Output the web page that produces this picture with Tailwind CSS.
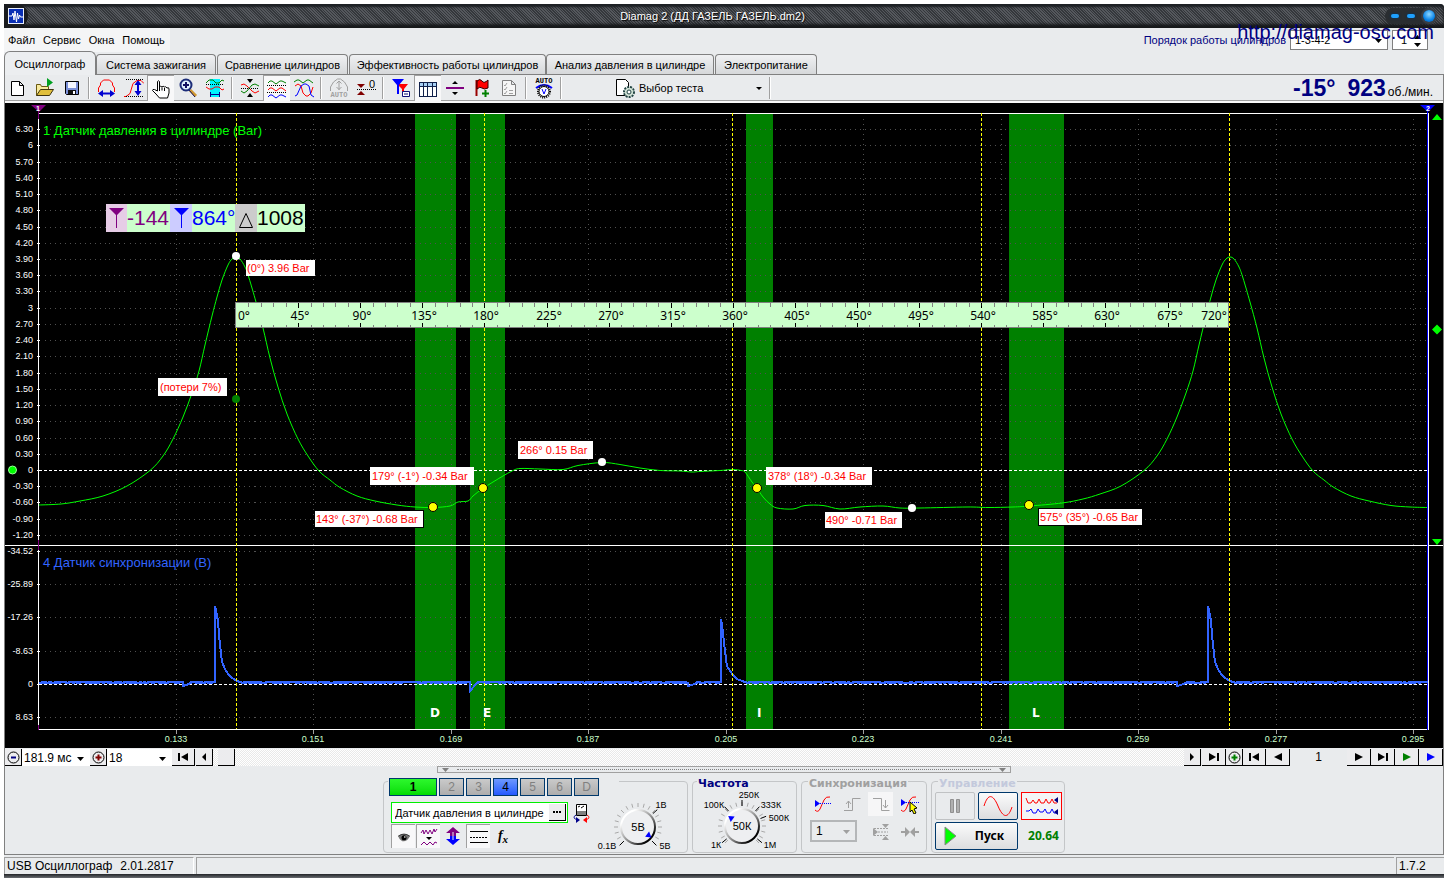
<!DOCTYPE html>
<html lang="ru">
<head>
<meta charset="utf-8">
<title>Diamag 2 (ДД ГАЗЕЛЬ ГАЗЕЛЬ.dm2)</title>
<script src="https://cdn.jsdelivr.net/npm/@tailwindcss/browser@4"></script>
</head>
<body class="bg-white font-['Liberation_Sans',sans-serif] text-[11px] leading-4 text-black">
<div class="relative min-h-screen flex flex-col px-1 pt-1">

<!-- Title bar -->
<header class="flex h-6 items-center justify-between rounded-t-sm bg-[repeating-linear-gradient(45deg,#34373b_0px,#34373b_1px,#55585d_1px,#55585d_2px)] shadow-[inset_0_3px_2px_#1d2024,inset_0_-4px_3px_#16181a]">
  <div class="flex h-6 w-6 items-center justify-center rounded-r-xl bg-[#1a1c1f]">
    <svg width="16" height="16" viewBox="0 0 16 16"><rect x=".5" y=".5" width="15" height="15" fill="#0a2fb4" stroke="#e8eefc"/><path d="M1 8h3l1-3 1 7 1-9 1.500 11 1-9 1 6 1-4 1 2h3" fill="none" stroke="#fff"/></svg>
  </div>
  <h1 class="flex-1 pl-3 text-center text-white [text-shadow:1px_1px_1px_#000]">Diamag 2 (ДД ГАЗЕЛЬ ГАЗЕЛЬ.dm2)</h1>
  <div class="mr-2 flex h-4 items-center gap-2 rounded-lg bg-[#2a2d31] pr-px pl-1.5">
    <button aria-label="Свернуть" class="h-1 w-2 rounded-sm bg-[#1ea0ff] shadow-[0_0_2px_1px_#15304a]"></button>
    <button aria-label="Развернуть" class="h-1 w-2 rounded-sm bg-[#1ea0ff] shadow-[0_0_2px_1px_#15304a]"></button>
    <button aria-label="Закрыть" class="h-3 w-3 rounded-full bg-[radial-gradient(circle_at_50%_35%,#8fd8ff,#0a84e8_60%,#0457a8)] shadow-[0_0_1px_2px_#3c4046]"></button>
  </div>
</header>

<div class="flex flex-1 flex-col bg-[#e9ebed]">
<!-- Menu -->
<div class="flex h-6 items-center justify-between">
  <nav class="flex h-6 w-[166px] items-center gap-2 bg-[#f4f5f6] pl-1">
    <a href="#">Файл</a><a href="#">Сервис</a><a href="#">Окна</a><a href="#">Помощь</a>
  </nav>
  <div class="flex items-center gap-1 pr-4">
    <label for="order" class="text-[#000080]">Порядок работы цилиндров</label>
    <div class="relative h-5 w-[98px] border border-[#808080] bg-white">
      <select id="order" class="h-full w-full appearance-none pl-1 leading-4"><option>1-3-4-2</option></select>
      <svg class="pointer-events-none absolute right-1 top-2" width="8" height="4"><path d="M0 0h7L3.500 4z"/></svg>
    </div>
    <div class="relative h-5 w-9 border border-[#808080] bg-white">
      <input aria-label="Цилиндр" value="1" class="h-full w-full pl-2 leading-4">
      <svg class="pointer-events-none absolute right-1 top-1" width="10" height="12"><path d="M1 4h7L4.500 0zM1 8h7L4.500 12z"/></svg>
    </div>
  </div>
</div>

<!-- Tabs -->
<div role="tablist" class="flex h-[23px] items-end border-b border-[#808080]">
  <button role="tab" aria-selected="true" class="-mb-px h-6 w-[92px] rounded-t-md border border-b-0 border-[#808080] bg-[#eceef0]">Осциллограф</button>
  <button role="tab" class="h-5 w-[120px] rounded-t-sm border border-b-0 border-[#808080] bg-linear-to-b from-[#f0f1f3] to-[#d6d8da]">Система зажигания</button>
  <button role="tab" class="ml-px h-5 w-[131px] rounded-t-sm border border-b-0 border-[#808080] bg-linear-to-b from-[#f0f1f3] to-[#d6d8da]">Сравнение цилиндров</button>
  <button role="tab" class="ml-px h-5 w-[197px] rounded-t-sm border border-b-0 border-[#808080] bg-linear-to-b from-[#f0f1f3] to-[#d6d8da]">Эффективность работы цилиндров</button>
  <button role="tab" class="h-5 w-[168px] rounded-t-sm border border-b-0 border-[#808080] bg-linear-to-b from-[#f0f1f3] to-[#d6d8da]">Анализ давления в цилиндре</button>
  <button role="tab" class="ml-px h-5 w-[102px] rounded-t-sm border border-b-0 border-[#808080] bg-linear-to-b from-[#f0f1f3] to-[#d6d8da]">Электропитание</button>
</div>

<main class="flex flex-col border-x border-b border-[#808080]">
<!-- Toolbar -->
<div class="flex h-7 items-center border-b-2 border-[#f8f8f8] shadow-[inset_0_-1px_0_#a0a0a0]">
  <button aria-label="Новый" class="flex h-[26px] w-[26px] items-center justify-center"><svg width="20" height="20" viewBox="0 0 20 20"><path d="M4.500 3.500h8l4 4v10h-12zM12.500 3.500v4h4" transform="translate(-1)" fill="#fff" stroke="#000"/></svg></button>
  <button aria-label="Открыть" class="flex h-[26px] w-[27px] items-center justify-center"><svg width="20" height="20" viewBox="0 0 20 20"><path d="M1.500 17.500v-11h4l1 2h7v3" fill="#f7ea9e" stroke="#6b5a10"/><path d="M1.500 17.500l4-6h13l-4 6z" fill="#e0bf3c" stroke="#3e3410"/><path d="M12 0v9l6-4.500z" fill="#00a020"/></svg></button>
  <button aria-label="Сохранить" class="flex h-[26px] w-[27px] items-center justify-center"><svg width="20" height="20" viewBox="0 0 20 20"><path d="M3.500 3.500h13v13h-12l-1-1z" fill="#7a8fd8" stroke="#000"/><path d="M6 4h8v6H6z" fill="#f4f6ff"/><path d="M6 12h8v4H6z" fill="#111"/><path d="M11 13h2v3h-2z" fill="#fff"/></svg></button>
  <span class="mx-[3px] h-[22px] w-0.5 border-l border-[#a0a0a0] bg-white"></span>
  <button aria-label="Ширина" class="flex h-[26px] w-[27px] items-center justify-center"><svg width="20" height="20" viewBox="0 0 20 20" fill="none"><path d="M1.500 14v-4l2-3V5l3-3h6l3 3v2l2 3v4" stroke="#f00"/><path d="M4 15.500h11" stroke="#0000d0" stroke-width="2"/><path d="M6 12v7l-5-3.500zM13 12v7l5-3.500z" fill="#0000d0"/></svg></button>
  <button aria-label="Высота" class="flex h-[26px] w-[27px] items-center justify-center"><svg width="20" height="20" viewBox="0 0 20 20" fill="none"><path d="M0 18.500h2l4-3 3-10 4-3h4l3 3" stroke="#f00"/><path d="M2 1.500h18M2 18.500h18" stroke="#000" stroke-dasharray="1 1"/><path d="M14 5v10" stroke="#0000d0" stroke-width="2"/><path d="M10.500 7h7L14 2zM10.500 13h7L14 18z" fill="#0000d0"/></svg></button>
  <button aria-label="Рука" aria-pressed="true" class="flex h-[26px] w-[27px] items-center justify-center border-l border-t border-[#a0a0a0] bg-[#f8f8f9]"><svg width="20" height="20" viewBox="0 0 20 20"><path d="M6.500 12V2.500q1-1.500 2 0V8q1-1.500 2.500 0 1-1.500 2.500 0 1-1 2.500 1 2-1 2 1v4l-1.500 5h-8L5 15l-3.500-3.500q0-1.500 2-1z" fill="#fff" stroke="#000"/><path d="M8.500 8v4M11 8.500v3M13.500 9v3" stroke="#000"/></svg></button>
  <button aria-label="Масштаб" class="flex h-[26px] w-[27px] items-center justify-center"><svg width="20" height="20" viewBox="0 0 20 20"><path d="M12 12l6 6" stroke="#d09830" stroke-width="3"/><path d="M11 12l6 7" stroke="#101060"/><circle cx="8" cy="7" r="5.500" fill="#dff1ff" stroke="#1c2c78" stroke-width="2"/><path d="M8 4v6M5 7h6" stroke="#101060" stroke-width="2"/></svg></button>
  <button aria-label="Участок" class="flex h-[26px] w-[27px] items-center justify-center"><svg width="20" height="20" viewBox="0 0 20 20" fill="none"><path d="M5 1h10v18H5z" fill="#00f4ff"/><path d="M1 5l3-3h4l3 3h3l3-3 2 1" stroke="#008000"/><path d="M1 9l3 2h3l3-2h4l3 3 2-1" stroke="#f00"/><path d="M1 6.500h18" stroke="#000" stroke-dasharray="1 1"/><path d="M5.500 14v5M14.500 14v5M6 16.500h9" stroke="#00008b"/></svg></button>
  <span class="mx-[3px] h-[22px] w-0.5 border-l border-[#a0a0a0] bg-white"></span>
  <button aria-label="Совместить" class="flex h-[26px] w-[27px] items-center justify-center"><svg width="20" height="20" viewBox="0 0 20 20" fill="none"><path d="M1 7l3-1 3 2 5 5 3 2 4-2" stroke="#f00"/><path d="M1 13l3 2 3-2 5-6 3-1 4 2" stroke="#008000"/><path d="M1 10.500h18" stroke="#000" stroke-dasharray="1 1"/><path d="M7 1h6l-3 4zM7 19h6l-3-4z" fill="#000"/></svg></button>
  <button aria-label="Раздельно" aria-pressed="true" class="flex h-[26px] w-[27px] items-center justify-center border-l border-t border-[#a0a0a0] bg-[#f8f8f9]"><svg width="20" height="20" viewBox="0 0 20 20" fill="none"><path d="M1 4l2-2h2l4 3 4-3h2l4 2" stroke="#008000"/><path d="M1 11l2-2h2l4 3 4-3h2l4 3" stroke="#f00"/><path d="M1 18l2-2h2l4 3 4-3h2l4 2" stroke="#00f"/><path d="M0 6.500h20M0 13.500h20" stroke="#000" stroke-dasharray="1 1"/></svg></button>
  <button aria-label="Вместе" class="flex h-[26px] w-[27px] items-center justify-center"><svg width="20" height="20" viewBox="0 0 20 20" fill="none"><path d="M0 4l3-2h2l4 3 4-3h2l4 3" stroke="#008000"/><path d="M1 8l3-2 3 2 2 7 3 3h2l3-3 2-6" stroke="#f00"/><path d="M1 18l2-1 4-9 3-2h2l3 2 2 9 3 2" stroke="#00f"/></svg></button>
  <span class="mx-[3px] h-[22px] w-0.5 border-l border-[#a0a0a0] bg-white"></span>
  <button aria-label="Авто масштаб" disabled class="flex h-[26px] w-[27px] items-center justify-center"><svg width="20" height="22" viewBox="0 0 20 22" fill="none"><path d="M1.500 14v-4l3-5 4-3h3l4 3 3 5v4M10 4v9M7.500 6.500L10 4l2.500 2.500M7.500 10l2.500 2.500 2.500-2.500" stroke="#a0a0a0"/><text x="10" y="20" text-anchor="middle" font-family="Liberation Mono, monospace" font-size="7" font-weight="bold" fill="#a0a0a0">AUTO</text></svg></button>
  <button aria-label="Ноль" class="flex h-[26px] w-[27px] items-center justify-center"><svg width="20" height="20" viewBox="0 0 20 20"><path d="M1 6h8l-4 4zM1 17h8l-4-4z" fill="#800000"/><path d="M1 11.500h19" stroke="#000" stroke-dasharray="1 1"/><text x="13" y="10" font-family="Liberation Sans, sans-serif" font-size="11">0</text></svg></button>
  <span class="mx-[3px] h-[22px] w-0.5 border-l border-[#a0a0a0] bg-white"></span>
  <button aria-label="Маркеры" class="flex h-[26px] w-[27px] items-center justify-center"><svg width="20" height="20" viewBox="0 0 20 20"><path d="M6 6h11l-4 5v7h-2v-7z" fill="#f00"/><path d="M1 1h12L8 7v9H6V7z" fill="#00f"/><path d="M11.500 13.500h7v5h-7z" fill="#fff" stroke="#10107a"/><path d="M13 16h2M16 15v2" stroke="#10107a"/></svg></button>
  <button aria-label="Таблица" aria-pressed="true" class="flex h-[26px] w-[27px] items-center justify-center border-l border-t border-[#a0a0a0] bg-[#f8f8f9]"><svg width="20" height="20" viewBox="0 0 20 20" shape-rendering="crispEdges"><path d="M1.500 3.500h17v14h-17z" fill="#fff" stroke="#10204a"/><path d="M2 4h16v3H2z" fill="#a8d0f4"/><path d="M1 7.500h18M5.500 3v14M9.500 3v14M14.500 3v14" stroke="#10204a"/></svg></button>
  <button aria-label="Линия" class="flex h-[26px] w-[27px] items-center justify-center"><svg width="20" height="20" viewBox="0 0 20 20"><path d="M1 9h18v2H1z" fill="#800080"/><path d="M7 6h6l-3-3zM7 14h6l-3 3z"/></svg></button>
  <button aria-label="Флаг" class="flex h-[26px] w-[27px] items-center justify-center"><svg width="20" height="20" viewBox="0 0 20 20"><path d="M4.500 2v16" stroke="#900" stroke-width="2"/><path d="M5 3q3-3 5 0t6-1v8q-4 2-6 0t-5 1z" fill="#f00" stroke="#300"/><path d="M13.500 12v7M10 15.500h7" stroke="#008000" stroke-width="2"/></svg></button>
  <button aria-label="Список" disabled class="flex h-[26px] w-[27px] items-center justify-center"><svg width="20" height="20" viewBox="0 0 20 20" fill="none"><path d="M3.500 2.500h9l4 4v11h-13zM12.500 2.500v4h4" stroke="#808080" fill="#f6f6f6"/><path d="M5 7l1 1 2-3M5 11l1 1 2-3M5 15l1 1 2-3M10 12.500h4M10 15.500h4" stroke="#a0a0a0"/></svg></button>
  <span class="mx-[3px] h-[22px] w-0.5 border-l border-[#a0a0a0] bg-white"></span>
  <button aria-label="Авто" class="flex h-[26px] w-[27px] items-center justify-center"><svg width="20" height="22" viewBox="0 0 20 22"><text x="10" y="6" text-anchor="middle" font-family="Liberation Mono, monospace" font-size="7" font-weight="bold">AUTO</text><path d="M2 11q8-6 16 0" fill="none" stroke="#00f" stroke-width="2"/><circle cx="10" cy="14.500" r="6" fill="#fff" stroke="#000" stroke-dasharray="1 1" stroke-width="2"/><circle cx="10" cy="14.500" r="5" fill="#fff" stroke="#000"/><path d="M8 12l2 5 2-5" fill="none" stroke="#00f"/></svg></button>
  <span class="mx-[3px] h-[22px] w-0.5 border-l border-[#a0a0a0] bg-white"></span>
  <div class="relative ml-[50px] flex h-[22px] w-[151px] items-center">
    <svg width="20" height="20" viewBox="0 0 20 20"><path d="M1.500 1.500h9l3 3v13h-12z" fill="#fff" stroke="#000"/><circle cx="14" cy="14" r="5" fill="#cfe0d4" stroke="#244" stroke-width="2" stroke-dasharray="2 1"/><circle cx="14" cy="14" r="4" fill="#cfe0d4"/><circle cx="14" cy="14" r="2" fill="#fff" stroke="#244"/></svg>
    <select aria-label="Выбор теста" class="h-5 flex-1 appearance-none pl-1 leading-4"><option>Выбор теста</option></select>
    <svg class="pointer-events-none absolute right-1 top-2.5" width="6" height="4"><path d="M0 0h6L3 3z"/></svg>
  </div>
  <span class="mx-[3px] h-[22px] w-0.5 border-l border-[#a0a0a0] bg-white"></span>
  <div class="ml-auto flex items-baseline pr-2.5 text-[#000080]">
    <output class="text-[23px] leading-6 font-bold">-15°</output>
    <output class="ml-3 text-[23px] leading-6 font-bold">923</output>
    <span class="ml-0.5 text-xs leading-4 text-black">об./мин.</span>
  </div>
</div>

<!-- Oscilloscope screen -->
<svg id="scope" class="block h-auto w-full bg-black" viewBox="5 103 1438 645" role="img" aria-label="Осциллограмма">
  <g fill="#008000"><path d="M415 114h41v615h-41zM470 114h35v615h-35zM746 114h27v615h-27zM1009 114h55v615h-55z"/></g>
  <g id="grid" transform="translate(.5 .5)" shape-rendering="crispEdges" fill="none"></g>
  <g font-family="Liberation Sans, sans-serif" font-size="9" fill="#fff" id="labels"></g>
  <g fill="none" shape-rendering="crispEdges">
    <path d="M38 113.500H1429M5 545.500H1443M38 729.500H1428M38.500 113V730M1428.500 113V730" stroke="#fff"/>
    <path d="M1427.500 108V730" stroke="#00f"/>
    <path d="M38.500 108v11M38.500 540v10M38.500 725v5" stroke="#800080"/>
    <path d="M39 470.500H1427M39 684.500H1427" stroke="#fff" stroke-dasharray="3 2"/>
  </g>
  <g fill="none">
    <path id="sync" stroke="#3264ff" stroke-width="2" shape-rendering="crispEdges"/>
    <path id="pressure" stroke="#0f0"/>
    <path d="M236.500 113V729M484.500 113V729M732.500 113V729M981.500 113V729M1229.500 113V729" stroke="#ff0" stroke-dasharray="3 2" shape-rendering="crispEdges"/>
  </g>
  <g font-family="Liberation Sans, sans-serif" font-size="13">
    <text x="43" y="135" fill="#0f0">1 Датчик давления в цилиндре (Bar)</text>
    <text x="43" y="567" fill="#3264ff">4 Датчик синхронизации (В)</text>
  </g>
  <g font-family="DejaVu Sans, sans-serif" font-size="12" font-weight="bold" fill="#fff">
    <text x="430" y="717">D</text><text x="483" y="717">E</text><text x="757" y="717">I</text><text x="1032" y="717">L</text>
  </g>
  <!-- degree ruler -->
  <path d="M235.500 302.500h993v25h-993z" fill="#cfc" stroke="#808080" shape-rendering="crispEdges"/>
  <g id="ruler" shape-rendering="crispEdges" font-family="Noto Sans, sans-serif" font-size="12"></g>
  <!-- cursor read-out -->
  <path d="M106 204h199v28H106z" fill="#cfc"/>
  <path d="M106 204h21v28h-21z" fill="#e6cce6"/><path d="M170 204h22v28h-22z" fill="#ccf"/><path d="M235 204h22v28h-22z" fill="#ccc"/>
  <path d="M109 208h15l-7 7v13h-1v-13z" fill="#800080"/><path d="M174 208h15l-7 7v13h-1v-13z" fill="#00f"/><path d="M246 213.500l6.500 14h-13z" fill="none" stroke="#000"/>
  <g font-family="Liberation Sans, sans-serif" font-size="21">
    <text x="127" y="225" fill="#800080">-144</text><text x="192" y="225" fill="#00f">864°</text><text x="257" y="225">1008</text>
  </g>
  <!-- callouts -->
  <path d="M314 510h110v18H314zM1038 508h105v18h-105z"/>
  <path fill="#fff" d="M246 260h69v16h-69zM158 378h69v18h-69zM370 467h104v18H370zM315 511h108v16H315zM518 441h75v18h-75zM766 467h106v18H766zM825 512h77v16h-77zM1039 509h103v16h-103z"/>
  <g font-family="Liberation Sans, sans-serif" font-size="11" fill="#f00">
    <text x="247" y="272">(0°) 3.96 Bar</text><text x="160" y="391">(потери 7%)</text><text x="372" y="480">179° (-1°) -0.34 Bar</text><text x="316" y="523">143° (-37°) -0.68 Bar</text><text x="520" y="454">266° 0.15 Bar</text><text x="768" y="480">378° (18°) -0.34 Bar</text><text x="826" y="524">490° -0.71 Bar</text><text x="1040" y="521">575° (35°) -0.65 Bar</text>
  </g>
  <g fill="#fff"><circle cx="236" cy="256" r="4"/><circle cx="602" cy="462" r="4"/><circle cx="912" cy="508" r="4"/></g>
  <g fill="#ff0" stroke="#000"><circle cx="433" cy="507" r="4.500"/><circle cx="483" cy="488" r="4.500"/><circle cx="757" cy="488" r="4.500"/><circle cx="1029" cy="505" r="4.500"/></g>
  <circle cx="236" cy="399" r="4" fill="#008000"/>
  <circle cx="12.500" cy="470" r="4" fill="#0f0" stroke="#9f9"/>
  <path fill="#0f0" d="M1432 120h10l-5-6zM1432 539h10l-5 6zM1432 329.500l5-5 5 5-5 5z"/>
  <path d="M31 105h15l-7 7z" fill="#800080"/><path d="M1420 105h15l-7 7z" fill="#00f"/>
  <g font-family="Liberation Sans, sans-serif" font-size="7" font-weight="bold" fill="#fff"><text x="36" y="111">1</text><text x="1426" y="111">2</text></g>
</svg>

<!-- Transport row -->
<div class="flex h-[18px] bg-[#e9ebed] pt-px text-xs leading-4">
  <button aria-label="Уменьшить" class="flex h-[17px] w-[17px] shrink-0 items-center justify-center border-r border-b border-black bg-[#ececee]"><svg width="13" height="13" viewBox="0 0 13 13" fill="none"><circle cx="6.500" cy="6.500" r="5.500" stroke="#000"/><path d="M4 6.500h5" stroke="#000080" stroke-width="2"/></svg></button>
  <div class="relative w-[68px] shrink-0 bg-white"><select aria-label="Развёртка" class="h-full w-full appearance-none pl-0.5 leading-4"><option>181.9 мс</option></select><svg class="pointer-events-none absolute right-1.5 top-2" width="7" height="4"><path d="M0 0h7L3.500 4z"/></svg></div>
  <button aria-label="Увеличить" class="flex h-[17px] w-[17px] shrink-0 items-center justify-center border-r border-b border-black bg-[#ececee]"><svg width="13" height="13" viewBox="0 0 13 13" fill="none"><circle cx="6.500" cy="6.500" r="5.500" stroke="#000"/><path d="M3.500 6.500h6M6.500 3.500v6" stroke="#800000" stroke-width="2"/></svg></button>
  <div class="relative w-[65px] shrink-0 bg-white"><select aria-label="Кадр" class="h-full w-full appearance-none pl-0.5 leading-4"><option>18</option></select><svg class="pointer-events-none absolute right-1.5 top-2" width="7" height="4"><path d="M0 0h7L3.500 4z"/></svg></div>
  <button aria-label="В начало" class="flex h-[17px] w-[23px] shrink-0 items-center justify-center border-r border-b border-black bg-[#ececee]"><svg width="12" height="8"><path d="M1 0h2v8H1zM11 0v8L4 4z"/></svg></button>
  <button aria-label="Влево" class="ml-px flex h-[17px] w-[17px] shrink-0 items-center justify-center border-r border-b border-black bg-[#ececee]"><svg width="6" height="8"><path d="M5 0v8L1 4z"/></svg></button>
  <div class="flex flex-1 bg-[repeating-conic-gradient(#e9e9e9_0_25%,#ffffff_0_50%)] bg-[size:2px_2px]"><div class="ml-[5px] h-[17px] w-[17px] border-r border-b border-black bg-[#ececee]"></div></div>
  <button aria-label="Вправо" class="flex h-[17px] w-[17px] shrink-0 items-center justify-center border-r border-b border-black bg-[#ececee]"><svg width="6" height="8"><path d="M1 0v8l4-4z"/></svg></button>
  <button aria-label="В конец" class="ml-px flex h-[17px] w-6 shrink-0 items-center justify-center border-r border-b border-black bg-[#ececee]"><svg width="12" height="8"><path d="M9 0h2v8H9zM1 0v8l7-4z"/></svg></button>
  <button aria-label="Добавить" class="flex h-[17px] w-[17px] shrink-0 items-center justify-center border-r border-b border-black bg-[#ececee]"><svg width="13" height="13" viewBox="0 0 13 13" fill="none"><circle cx="6.500" cy="6.500" r="5.500" stroke="#000"/><path d="M3.500 6.500h6M6.500 3.500v6" stroke="#008000" stroke-width="2"/></svg></button>
  <button aria-label="Первый цикл" class="flex h-[17px] w-[23px] shrink-0 items-center justify-center border-r border-b border-black bg-[#ececee]"><svg width="12" height="8"><path d="M1 0h2v8H1zM11 0v8L4 4z"/></svg></button>
  <button aria-label="Предыдущий цикл" class="flex h-[17px] w-6 shrink-0 items-center justify-center border-r border-b border-black bg-[#ececee]"><svg width="8" height="8"><path d="M8 0v8L0 4z"/></svg></button>
  <output class="w-[57px] shrink-0 text-center">1</output>
  <button aria-label="Следующий цикл" class="flex h-[17px] w-6 shrink-0 items-center justify-center border-r border-b border-black bg-[#ececee]"><svg width="8" height="8"><path d="M0 0v8l8-4z"/></svg></button>
  <button aria-label="Последний цикл" class="flex h-[17px] w-6 shrink-0 items-center justify-center border-r border-b border-black bg-[#ececee]"><svg width="12" height="8"><path d="M9 0h2v8H9zM1 0v8l7-4z"/></svg></button>
  <button aria-label="Воспроизвести" class="flex h-[17px] w-6 shrink-0 items-center justify-center border-r border-b border-black bg-[#ececee]"><svg width="8" height="8"><path d="M0 0v8l8-4z" fill="#008000"/></svg></button>
  <button aria-label="Дальше" class="flex h-[17px] w-6 shrink-0 items-center justify-center border-r border-b border-black bg-[#ececee]"><svg width="8" height="8"><path d="M0 0v8l8-4z" fill="#00f"/></svg></button>
</div>

<!-- Splitter -->
<div class="mx-auto flex h-[7px] w-[574px] items-center justify-between border border-[#a0a0a0] px-1">
  <svg width="7" height="4"><path d="M0 0h7L3.500 4z" fill="#808080"/></svg>
  <div class="mx-2 flex-1 border-t border-dotted border-[#808080]"></div>
  <svg width="7" height="4"><path d="M0 0h7L3.500 4z" fill="#808080"/></svg>
</div>

<!-- Control panel -->
<div class="flex justify-center gap-1 pt-2 pb-px">
  <section aria-label="Каналы" class="relative flex h-[72px] w-[305px] rounded border border-[#c4c6c8]">
    <div class="absolute -top-1 left-1 flex gap-0.5 bg-[#e9ebed] px-px pr-5 text-xs leading-4">
      <button class="h-[18px] w-12 border border-[#00386b] bg-linear-to-b from-[#2cf82c] to-[#00dc00] font-bold">1</button>
      <button class="h-[18px] w-[25px] border border-[#00386b] bg-linear-to-b from-[#cacaca] to-[#adadad] text-[#808080]">2</button>
      <button class="h-[18px] w-[25px] border border-[#00386b] bg-linear-to-b from-[#cacaca] to-[#adadad] text-[#808080]">3</button>
      <button class="h-[18px] w-[25px] border border-[#00386b] bg-linear-to-b from-[#6f98ff] to-[#2457ff]">4</button>
      <button class="h-[18px] w-[25px] border border-[#00386b] bg-linear-to-b from-[#cacaca] to-[#adadad] text-[#808080]">5</button>
      <button class="h-[18px] w-[25px] border border-[#00386b] bg-linear-to-b from-[#cacaca] to-[#adadad] text-[#808080]">6</button>
      <button class="h-[18px] w-[25px] border border-[#00386b] bg-linear-to-b from-[#cacaca] to-[#adadad] text-[#808080]">D</button>
    </div>
    <div class="flex flex-col gap-px pt-5 pl-[7px]">
      <div class="flex items-center gap-1">
        <div class="flex h-[21px] w-[177px] border border-[#00f000] bg-white p-px">
          <input aria-label="Датчик" value="Датчик давления в цилиндре" class="min-w-0 flex-1 pl-0.5 text-[11px]">
          <button aria-label="Выбрать датчик" class="flex w-[17px] items-center justify-center border-r border-b border-black bg-[#ececee]"><svg width="9" height="2"><path d="M0 0h2v2H0zM3 0h2v2H3zM6 0h2v2H6z"/></svg></button>
        </div>
        <button aria-label="Калибровка"><svg width="20" height="20" viewBox="0 0 20 20" fill="none"><path d="M4.500 1.500h10v11h-10z" fill="#fff" stroke="#000"/><path d="M5 8h9v4H5z" fill="#808080"/><path d="M6 4l2-1M9 5l3-2" stroke="#000"/><path d="M4 12q-5 3 2 5" stroke="#00008b"/><path d="M4 14l4 3-4 3z" fill="#00008b"/><path d="M15 12q5 3-2 5" stroke="#f00"/><path d="M15 14l-4 3 4 3z" fill="#f00"/></svg></button>
      </div>
      <div class="flex gap-px">
        <button aria-label="Показать" aria-pressed="true" class="flex h-6 w-6 items-center justify-center border-l border-t border-[#a0a0a0] bg-[#f8f8f9]"><svg width="14" height="10" viewBox="0 0 16 12"><path d="M1 5q7-5 14 0-3 7-9 6-4-2-5-6z" fill="#777"/><path d="M1 5q7-5 14 0" fill="none" stroke="#222"/><circle cx="8" cy="7" r="3"/><circle cx="9" cy="6" r="1" fill="#fff"/></svg></button>
        <button aria-label="Фильтр" aria-pressed="true" class="flex h-6 w-6 items-center justify-center border-l border-t border-[#a0a0a0] bg-[#f8f8f9]"><svg width="18" height="20" viewBox="0 0 18 20" fill="none"><path d="M1 6l2-3 1 4 2-4 2 4 2-4 2 4 2-5 1 3 2-3M1 18l3-3 3 3 3-3 3 3 2-3 2 1" stroke="#800080"/><path d="M6 10h6l-3 3z" fill="#000"/></svg></button>
        <button aria-label="Сдвиг" class="flex h-6 w-6 items-center justify-center"><svg width="18" height="20" viewBox="0 0 18 20"><path d="M9 1l7 6h-4v3H6V7H2z" fill="#800080"/><path d="M9 19l7-6h-4v-3H6v3H2z" fill="#00f"/><path d="M9 6v8" stroke="#e9ebed"/></svg></button>
        <button aria-label="Уровни" aria-pressed="true" class="flex h-6 w-6 items-center justify-center border-l border-t border-[#a0a0a0] bg-[#f8f8f9]"><svg width="18" height="16" shape-rendering="crispEdges"><path d="M0 2.500h18M0 13.500h18" stroke="#000"/><path d="M0 8.500h18" stroke="#000" stroke-dasharray="2 1"/></svg></button>
        <button aria-label="Функция" class="h-6 w-6 font-['Liberation_Serif',serif] text-sm leading-4 font-bold italic">f<sub class="text-[11px]">x</sub></button>
      </div>
    </div>
    <svg class="knob ml-auto h-[70px] w-[92px]" data-value="5В" data-pointer="38" viewBox="0 0 92 70"></svg>
  </section>

  <section aria-labelledby="freq" class="relative flex h-[72px] w-[105px] rounded border border-[#c4c6c8]">
    <h2 id="freq" class="absolute -top-1.5 left-1 bg-[#e9ebed] px-px font-['DejaVu_Sans',sans-serif] text-[11px] leading-4 font-bold text-[#000080]">Частота</h2>
    <svg class="knob h-[70px] w-[103px]" data-value="50К" data-pointer="216" viewBox="0 0 103 70"></svg>
  </section>

  <section aria-labelledby="syn" class="relative h-[72px] w-[126px] rounded border border-[#c4c6c8]">
    <h2 id="syn" class="absolute -top-1.5 left-1.5 bg-[#e9ebed] px-px font-['DejaVu_Sans',sans-serif] text-[11px] leading-4 font-bold text-[#a0a0a0]">Синхронизация</h2>
    <div class="grid grid-cols-[25px_25px_25px_25px] gap-x-1 gap-y-1 pt-2.5 pl-2">
      <button aria-label="Синхронизация по уровню" class="flex h-6 items-center justify-center"><svg width="18" height="20" viewBox="0 0 18 20" fill="none"><path d="M1 16q3 3 5-1l4-9q2-4 6-3" stroke="#f00"/><path d="M6 9.500h12" stroke="#00f" stroke-dasharray="1 1"/><path d="M1 6v7l5-3.500z" fill="#00f"/></svg></button>
      <button disabled aria-label="Фронт" class="flex h-6 items-center justify-center"><svg width="18" height="18" viewBox="0 0 18 18" fill="none" stroke="#a0a0a0"><path d="M1 15.500h8.500v-12h8M5.500 13V6M3 9l2.500-3L8 9"/></svg></button>
      <button disabled aria-label="Спад" class="flex h-6 items-center justify-center bg-[#f6f6f7]"><svg width="18" height="18" viewBox="0 0 18 18" fill="none" stroke="#a0a0a0"><path d="M1 3.500h8.500v12h8M13.500 5v8M11 10l2.500 3 2.500-3"/></svg></button>
      <button aria-label="Выбор уровня" class="flex h-6 items-center justify-center"><svg width="20" height="20" viewBox="0 0 20 20" fill="none"><path d="M1 16q3 3 5-1l4-9q2-4 6-3" stroke="#f00"/><path d="M6 8.500h13" stroke="#00f" stroke-dasharray="1 1"/><path d="M1 5v7l5-3.500z" fill="#00f"/><path d="M10 8l7 6-3 1 2 4-2 1-2-4-2 2z" fill="#ff0" stroke="#000"/></svg></button>
      <div class="relative col-span-2 h-[22px] w-[47px] border-2 border-[#b4b6b8]"><select disabled aria-label="Канал синхронизации" class="h-full w-full appearance-none pl-1 text-xs leading-4"><option>1</option></select><svg class="pointer-events-none absolute right-1 top-2" width="8" height="4"><path d="M0 0h7L3.500 4z" fill="#a0a0a0"/></svg></div>
      <button disabled aria-label="Окно" class="flex h-6 items-center justify-center"><svg width="18" height="18" viewBox="0 0 18 18"><path d="M1 5v8l5-4zM10 1h7l-3.500 4zM10 17h7l-3.500-4z" fill="#a0a0a0"/><path d="M2 5.500h15M2 12.500h15M6 9h10" stroke="#a0a0a0" stroke-dasharray="2 1"/></svg></button>
      <button disabled aria-label="Сжать" class="flex h-6 items-center justify-center"><svg width="18" height="10" viewBox="0 0 18 10"><path d="M0 4h4V0l5 5-5 5V6H0zM18 4h-4V0L9 5l5 5V6h4z" fill="#a0a0a0"/></svg></button>
    </div>
  </section>

  <section aria-labelledby="ctl" class="relative h-[72px] w-[134px] rounded border border-[#c4c6c8]">
    <h2 id="ctl" class="absolute -top-1.5 left-1.5 bg-[#e9ebed] px-px font-['DejaVu_Sans',sans-serif] text-[11px] leading-4 font-bold text-[#c3c9dc]">Управление</h2>
    <div class="grid grid-cols-[40px_40px_41px] gap-x-[3px] gap-y-0.5 pt-2.5 pl-[3px]">
      <button disabled aria-label="Пауза" class="flex h-7 items-center justify-center rounded-xs border border-[#c0c2c4]"><svg width="12" height="16"><path d="M1.500 1.500h3v13h-3zM7.500 1.500h3v13h-3z" fill="#b0b0b0" stroke="#909090"/></svg></button>
      <button aria-label="Синус" class="flex h-7 items-center justify-center rounded-xs border border-[#00386b] bg-linear-to-b from-[#fbfbfb] to-[#dcdddf]"><svg width="30" height="22" viewBox="0 0 30 22"><path d="M1 11C5-2 10-1 15 11s10 13 14 1" fill="none" stroke="#f00"/></svg></button>
      <button aria-label="Непрерывно" class="flex h-7 items-center justify-center border border-[#f00] bg-[#f4f4f5]"><svg width="34" height="22" viewBox="0 0 34 22" fill="none"><path d="M1 3l2 5h3l2-3 2 3h2l2-4 2 4h3l2-4 2 4h2l2-4 2 4h3" stroke="#f00"/><path d="M1 16h3l2-2 2 4h3l2-4 2 3h3l2-3 2 4h3l2-4 2 4h3" stroke="#00f"/><path d="M33 2v6l-4-3zM33 14v6l-4-3z" fill="#000080"/></svg></button>
      <button class="col-span-2 flex h-7 items-center rounded-xs border border-[#00386b] bg-linear-to-b from-[#fbfbfb] to-[#dcdddf] pl-2 font-['Noto_Sans',sans-serif] text-xs leading-4 font-bold"><svg width="14" height="20" viewBox="0 0 14 20"><path d="M1 1v18l11-9z" fill="#0f0" stroke="#888"/></svg><span class="flex-1 pl-1 text-center">Пуск</span></button>
      <output class="self-center pl-1 text-center font-['Noto_Sans',sans-serif] text-xs leading-4 font-bold text-[#008000]">20.64</output>
    </div>
  </section>
</div>
</main>

<!-- Status bar -->
<footer class="mt-0.5 flex h-[17px] gap-0.5 text-xs leading-4">
  <div class="flex w-[190px] gap-2 border-l border-t border-[#a0a0a0] border-r border-r-white pl-0.5"><span>USB Осциллограф</span><span>2.01.2817</span></div>
  <div class="flex-1 border-l border-t border-[#a0a0a0]"></div>
  <div class="w-12 border-l border-t border-[#a0a0a0] pl-0.5">1.7.2</div>
</footer>
</div>
<div class="h-1 bg-linear-to-b from-[#222428] to-[#6a6d72]"></div>

<a href="http://diamag-osc.com" class="absolute top-5 right-3.5 text-[20px] leading-6 text-[#000080]">http://diamag-osc.com</a>
</div>

<script>
const el = id => document.getElementById(id);
// Grid and scales
const barY = v => Math.round(470 - v * 54.1);
let g = '', t = '';
const rows = [];
for (let i = 21; i >= -4; i--) { const v = i * 0.3; rows.push([barY(v), Number.isInteger(+v.toFixed(2)) ? v.toFixed(0).replace('-0', '0') : v.toFixed(2)]); }
[[551, '-34.52'], [584, '-25.89'], [617, '-17.26'], [651, '-8.63'], [684, '0'], [717, '8.63']].forEach(r => rows.push(r));
rows.forEach(([y, s]) => {
  g += `<path d="M44 ${y}H1427" stroke="#505050" stroke-dasharray="1 4"/><path d="M36 ${y}H39" stroke="#fff"/>`;
  t += `<text x="33" y="${y + 3}" text-anchor="end">${s}</text>`;
});
[[176, '0.133'], [313, '0.151'], [451, '0.169'], [588, '0.187'], [726, '0.205'], [863, '0.223'], [1001, '0.241'], [1138, '0.259'], [1276, '0.277'], [1413, '0.295']].forEach(([x, s]) => {
  g += `<path d="M${x} 118V729" stroke="#505050" stroke-dasharray="1 4"/><path d="M${x} 729V733" stroke="#a0a0a0"/>`;
  t += `<text x="${x}" y="742" text-anchor="middle" fill="#ccffcc">${s}</text>`;
});
el('grid').innerHTML = g;
el('labels').innerHTML = t;

// Cylinder pressure trace: samples joined by a smooth spline
const peak = [[-109,486],[-86,470.5],[-73,456],[-63,439],[-53,417],[-44,393],[-37,371],[-31,345],[-24,316],[-19,297],[-14,280],[-8,265],[-4,259],[0,257],[4,259],[9,267],[13,278],[20,302],[27,328],[34,358],[42,387],[51,414],[62,439],[72,456],[83,471],[94,480],[104,487.5],[121,496],[139,501]];
const pts = [[39,505],[61,504],[80,501],[103,496],
  ...peak.map(([x, y]) => [236 + x, y]),
  [397,505],[415,507],[433,507.5],[450,506],[458,502],[468,501],[473,496],[482,489],[493,482],[503,476],[512,471],[520,468.5],[540,469],[563,469.5],[578,465.5],[602,462.5],[620,464.5],[640,468],[660,470.5],[680,471],[692,472],[700,471.5],[720,470.5],[733,469.5],[741,470.5],[745,472],[752,482],[757,488],[763,497],[770,504],[777,508],[793,509],[805,505.5],[823,505.5],[840,509],[860,507],[883,506],[900,508],[920,508],[967,507],[988,507.5],[1013,507],[1030,506],[1062,503],[1083,499],[1100,494],
  ...peak.map(([x, y]) => [1230 + x, y]),
  [1391,505.5],[1410,507],[1427,507.5]];
let c = `M${pts[0]}`;
for (let i = 0; i < pts.length - 1; i++) {
  const [a, b, e, f] = [pts[i - 1] || pts[i], pts[i], pts[i + 1], pts[i + 2] || pts[i + 1]];
  c += `C${b[0] + (e[0] - a[0]) / 6} ${b[1] + (e[1] - a[1]) / 6} ${e[0] - (f[0] - b[0]) / 6} ${e[1] - (f[1] - b[1]) / 6} ${e}`;
}
el('pressure').setAttribute('d', c);

// Degree ruler
let r = '';
for (let i = 0; i <= 80; i++) {
  const x = Math.round(236 + i * 12.42), major = i % 5 === 0;
  if (i && i < 80) r += `<path d="M${x + .5} 303v${major ? 5 : 4}M${x + .5} 327v-${major ? 4 : 2}" stroke="${major ? '#000' : '#808080'}"/>`;
  if (major) r += `<text x="${i ? (i === 80 ? 1214 : x + 2) : 244}" y="320" text-anchor="middle">${i * 9}°</text>`;
}
el('ruler').innerHTML = r;

// Sync sensor trace: ignition spikes over a noisy baseline
const spikes = { 216: 606, 721: 619, 1209: 606 }, dips = { 183: 3, 470: 8, 689: 3, 1178: 3 };
let d = 'M39 683', seed = 7;
for (let x = 40; x < 1427; x++) {
  if (spikes[x]) {
    const h = 683 - spikes[x];
    d += `V${spikes[x]}`;
    [[2, .8], [3, .62], [5, .38], [6, .27], [9, .18], [12, .12], [16, .07], [21, .03], [27, 0]].forEach(([dx, k]) => d += `L${x + dx} ${Math.round(683 - h * k)}`);
    x += 27; continue;
  }
  if (dips[x]) { d += `V${683 + dips[x]}L${x + 6} 684L${x + 7} 683`; x += 7; continue; }
  seed = (seed * 16807) % 2147483647;
  d += seed % 5 < 3 ? `H${x}v-1h1v1` : `H${x}`;
}
el('sync').setAttribute('d', d);

// Rotary knobs
const scales = {
  '5В': { cx: 43, cy: 45, marks: [[135, '0.1В', 12, 67], [318, '1В', 66, 26], [45, '5В', 70, 67]] },
  '50К': { cx: 49, cy: 44, marks: [[140, '1К', 23, 66], [228, '100К', 21, 26], [270, '250К', 56, 16], [312, '333К', 78, 26], [338, '500К', 86, 39], [40, '1М', 77, 66]] }
};
document.querySelectorAll('.knob').forEach(k => {
  const { cx, cy, marks } = scales[k.dataset.value];
  const at = (a, q) => [(cx + q * Math.cos(a * Math.PI / 180)).toFixed(1), (cy + q * Math.sin(a * Math.PI / 180)).toFixed(1)];
  let s = `<defs><linearGradient id="rim${cx}" x1="0" y1="0" x2="1" y2="1"><stop offset=".2" stop-color="#fff"/><stop offset=".6" stop-color="#777"/><stop offset=".85" stop-color="#000"/></linearGradient></defs>`;
  for (let a = 135; a <= 405; a += 15) s += `<path d="M${at(a, 20)}L${at(a, 24)}" stroke="#a8a8a8"/>`;
  marks.forEach(([a, label, x, y]) => s += `<path d="M${at(a, 20)}L${at(a, 26)}" stroke="#000"/><text x="${x}" y="${y}" text-anchor="middle" font-family="Liberation Sans, sans-serif" font-size="9">${label}</text>`);
  s += `<circle cx="${cx}" cy="${cy}" r="17" fill="#eeeff1" stroke="url(#rim${cx})" stroke-width="2"/>`;
  const p = +k.dataset.pointer;
  s += `<path d="M${at(p, 17)}L${at(p - 16, 12)}L${at(p + 16, 12)}Z" fill="#00f"/>`;
  s += `<text x="${cx}" y="${cy + 4}" text-anchor="middle" font-family="Liberation Sans, sans-serif" font-size="11">${k.dataset.value}</text>`;
  k.innerHTML = s;
});
</script>
</body>
</html>
